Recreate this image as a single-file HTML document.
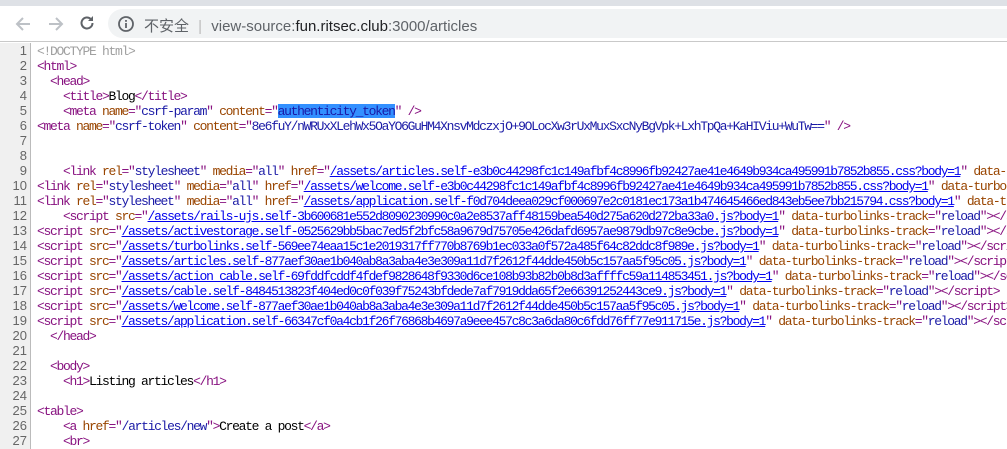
<!DOCTYPE html>
<html><head><meta charset="utf-8"><style>
*{margin:0;padding:0;box-sizing:border-box}
body{width:1007px;height:449px;overflow:hidden;background:#fff;position:relative;font-family:"Liberation Sans","Noto Sans CJK SC",sans-serif}
.top{position:absolute;left:0;top:0;width:1007px;height:6px;background:#dee1e6}
.bar{position:absolute;left:0;top:6px;width:1007px;height:36px;background:#fff;border-bottom:1px solid #c9c9c9}
.pill{position:absolute;left:108px;top:3px;width:920px;height:29px;border-radius:15px;background:#f1f3f4}
.addr{position:absolute;left:144px;top:9px;font-size:15px;color:#5f6368;white-space:nowrap}
.addr .h{color:#202124}
.gut{position:absolute;left:0;top:43px;width:31px;height:406px;background:#f0f0f0;border-right:1px solid #bbb}
.code{position:absolute;left:0;top:43px;width:1007px;font-family:"Liberation Mono","Noto Sans CJK SC",monospace;font-size:13px;letter-spacing:-1.3px;line-height:15px;color:#000}
.l{height:15px;position:relative;overflow:hidden;white-space:pre}
.n{display:inline-block;width:27px;text-align:right;color:#666;margin-right:10px;letter-spacing:0;font-family:"Liberation Sans",sans-serif;font-size:13px}
.t{color:#881280}.a{color:#994500}.v{color:#1a1aa6}.k{text-decoration:underline;color:#0000ee}.c{color:#a0a0a0}
.sel{background:#3390ff;color:#1a1aa6}
</style></head><body>
<div class="top"></div>
<div class="bar">
<svg style="position:absolute;left:14px;top:9px" width="18" height="18" viewBox="0 0 18 18"><path d="M16 9H3M9 3L3 9l6 6" stroke="#bdc1c6" stroke-width="2" fill="none"/></svg>
<svg style="position:absolute;left:47px;top:9px" width="18" height="18" viewBox="0 0 18 18"><path d="M2 9h13M9 3l6 6-6 6" stroke="#bdc1c6" stroke-width="2" fill="none"/></svg>
<svg style="position:absolute;left:78px;top:8px" width="18" height="18" viewBox="0 0 18 18"><path d="M14.5 9a5.5 5.5 0 1 1-1.6-3.9" stroke="#5f6368" stroke-width="2" fill="none"/><path d="M15 2v5h-5z" fill="#5f6368"/></svg>
<div class="pill"></div>
<svg style="position:absolute;left:117px;top:9px" width="18" height="18" viewBox="0 0 18 18"><circle cx="9" cy="9" r="7" stroke="#5f6368" stroke-width="1.8" fill="none"/><rect x="8.1" y="8" width="1.8" height="5" fill="#5f6368"/><rect x="8.1" y="5" width="1.8" height="1.8" fill="#5f6368"/></svg>
<div class="addr">不安全 <span style="color:#bbb;margin:0 5px">|</span> view-source:<span class="h">fun.ritsec.club</span>:3000/articles</div>
</div>
<div class="gut"></div>
<div class="code"><div class="l"><span class="n">1</span><span class="c">&lt;!DOCTYPE html&gt;</span></div><div class="l"><span class="n">2</span><span class="t">&lt;html&gt;</span></div><div class="l"><span class="n">3</span>  <span class="t">&lt;head&gt;</span></div><div class="l"><span class="n">4</span>    <span class="t">&lt;title&gt;</span>Blog<span class="t">&lt;/title&gt;</span></div><div class="l"><span class="n">5</span>    <span class="t">&lt;meta <span class="a">name</span>="<span class="v">csrf-param</span>" <span class="a">content</span>="<span class="sel">authenticity_token</span>" /&gt;</span></div><div class="l"><span class="n">6</span><span class="t">&lt;meta <span class="a">name</span>="<span class="v">csrf-token</span>" <span class="a">content</span>="<span class="v">8e6fuY/nWRUxXLehWx5OaYO6GuHM4XnsvMdczxjO+9OLocXw3rUxMuxSxcNyBgVpk+LxhTpQa+KaHIViu+WuTw==</span>" /&gt;</span></div><div class="l"><span class="n">7</span></div><div class="l"><span class="n">8</span></div><div class="l"><span class="n">9</span>    <span class="t">&lt;link <span class="a">rel</span>="<span class="v">stylesheet</span>" <span class="a">media</span>="<span class="v">all</span>" <span class="a">href</span>="<span class="k">/assets/articles.self-e3b0c44298fc1c149afbf4c8996fb92427ae41e4649b934ca495991b7852b855.css?body=1</span>" <span class="a">data-turbolinks-track</span>="<span class="v">reload</span>" /&gt;</span></div><div class="l"><span class="n">10</span><span class="t">&lt;link <span class="a">rel</span>="<span class="v">stylesheet</span>" <span class="a">media</span>="<span class="v">all</span>" <span class="a">href</span>="<span class="k">/assets/welcome.self-e3b0c44298fc1c149afbf4c8996fb92427ae41e4649b934ca495991b7852b855.css?body=1</span>" <span class="a">data-turbolinks-track</span>="<span class="v">reload</span>" /&gt;</span></div><div class="l"><span class="n">11</span><span class="t">&lt;link <span class="a">rel</span>="<span class="v">stylesheet</span>" <span class="a">media</span>="<span class="v">all</span>" <span class="a">href</span>="<span class="k">/assets/application.self-f0d704deea029cf000697e2c0181ec173a1b474645466ed843eb5ee7bb215794.css?body=1</span>" <span class="a">data-turbolinks-track</span>="<span class="v">reload</span>" /&gt;</span></div><div class="l"><span class="n">12</span>    <span class="t">&lt;script <span class="a">src</span>="<span class="k">/assets/rails-ujs.self-3b600681e552d8090230990c0a2e8537aff48159bea540d275a620d272ba33a0.js?body=1</span>" <span class="a">data-turbolinks-track</span>="<span class="v">reload</span>"&gt;&lt;/script&gt;</span></div><div class="l"><span class="n">13</span><span class="t">&lt;script <span class="a">src</span>="<span class="k">/assets/activestorage.self-0525629bb5bac7ed5f2bfc58a9679d75705e426dafd6957ae9879db97c8e9cbe.js?body=1</span>" <span class="a">data-turbolinks-track</span>="<span class="v">reload</span>"&gt;&lt;/script&gt;</span></div><div class="l"><span class="n">14</span><span class="t">&lt;script <span class="a">src</span>="<span class="k">/assets/turbolinks.self-569ee74eaa15c1e2019317ff770b8769b1ec033a0f572a485f64c82ddc8f989e.js?body=1</span>" <span class="a">data-turbolinks-track</span>="<span class="v">reload</span>"&gt;&lt;/script&gt;</span></div><div class="l"><span class="n">15</span><span class="t">&lt;script <span class="a">src</span>="<span class="k">/assets/articles.self-877aef30ae1b040ab8a3aba4e3e309a11d7f2612f44dde450b5c157aa5f95c05.js?body=1</span>" <span class="a">data-turbolinks-track</span>="<span class="v">reload</span>"&gt;&lt;/script&gt;</span></div><div class="l"><span class="n">16</span><span class="t">&lt;script <span class="a">src</span>="<span class="k">/assets/action_cable.self-69fddfcddf4fdef9828648f9330d6ce108b93b82b0b8d3affffc59a114853451.js?body=1</span>" <span class="a">data-turbolinks-track</span>="<span class="v">reload</span>"&gt;&lt;/script&gt;</span></div><div class="l"><span class="n">17</span><span class="t">&lt;script <span class="a">src</span>="<span class="k">/assets/cable.self-8484513823f404ed0c0f039f75243bfdede7af7919dda65f2e66391252443ce9.js?body=1</span>" <span class="a">data-turbolinks-track</span>="<span class="v">reload</span>"&gt;&lt;/script&gt;</span></div><div class="l"><span class="n">18</span><span class="t">&lt;script <span class="a">src</span>="<span class="k">/assets/welcome.self-877aef30ae1b040ab8a3aba4e3e309a11d7f2612f44dde450b5c157aa5f95c05.js?body=1</span>" <span class="a">data-turbolinks-track</span>="<span class="v">reload</span>"&gt;&lt;/script&gt;</span></div><div class="l"><span class="n">19</span><span class="t">&lt;script <span class="a">src</span>="<span class="k">/assets/application.self-66347cf0a4cb1f26f76868b4697a9eee457c8c3a6da80c6fdd76ff77e911715e.js?body=1</span>" <span class="a">data-turbolinks-track</span>="<span class="v">reload</span>"&gt;&lt;/script&gt;</span></div><div class="l"><span class="n">20</span>  <span class="t">&lt;/head&gt;</span></div><div class="l"><span class="n">21</span></div><div class="l"><span class="n">22</span>  <span class="t">&lt;body&gt;</span></div><div class="l"><span class="n">23</span>    <span class="t">&lt;h1&gt;</span>Listing articles<span class="t">&lt;/h1&gt;</span></div><div class="l"><span class="n">24</span></div><div class="l"><span class="n">25</span><span class="t">&lt;table&gt;</span></div><div class="l"><span class="n">26</span>    <span class="t">&lt;a <span class="a">href</span>="<span class="v">/articles/new</span>"&gt;</span>Create a post<span class="t">&lt;/a&gt;</span></div><div class="l"><span class="n">27</span>    <span class="t">&lt;br&gt;</span></div></div>
</body></html>
